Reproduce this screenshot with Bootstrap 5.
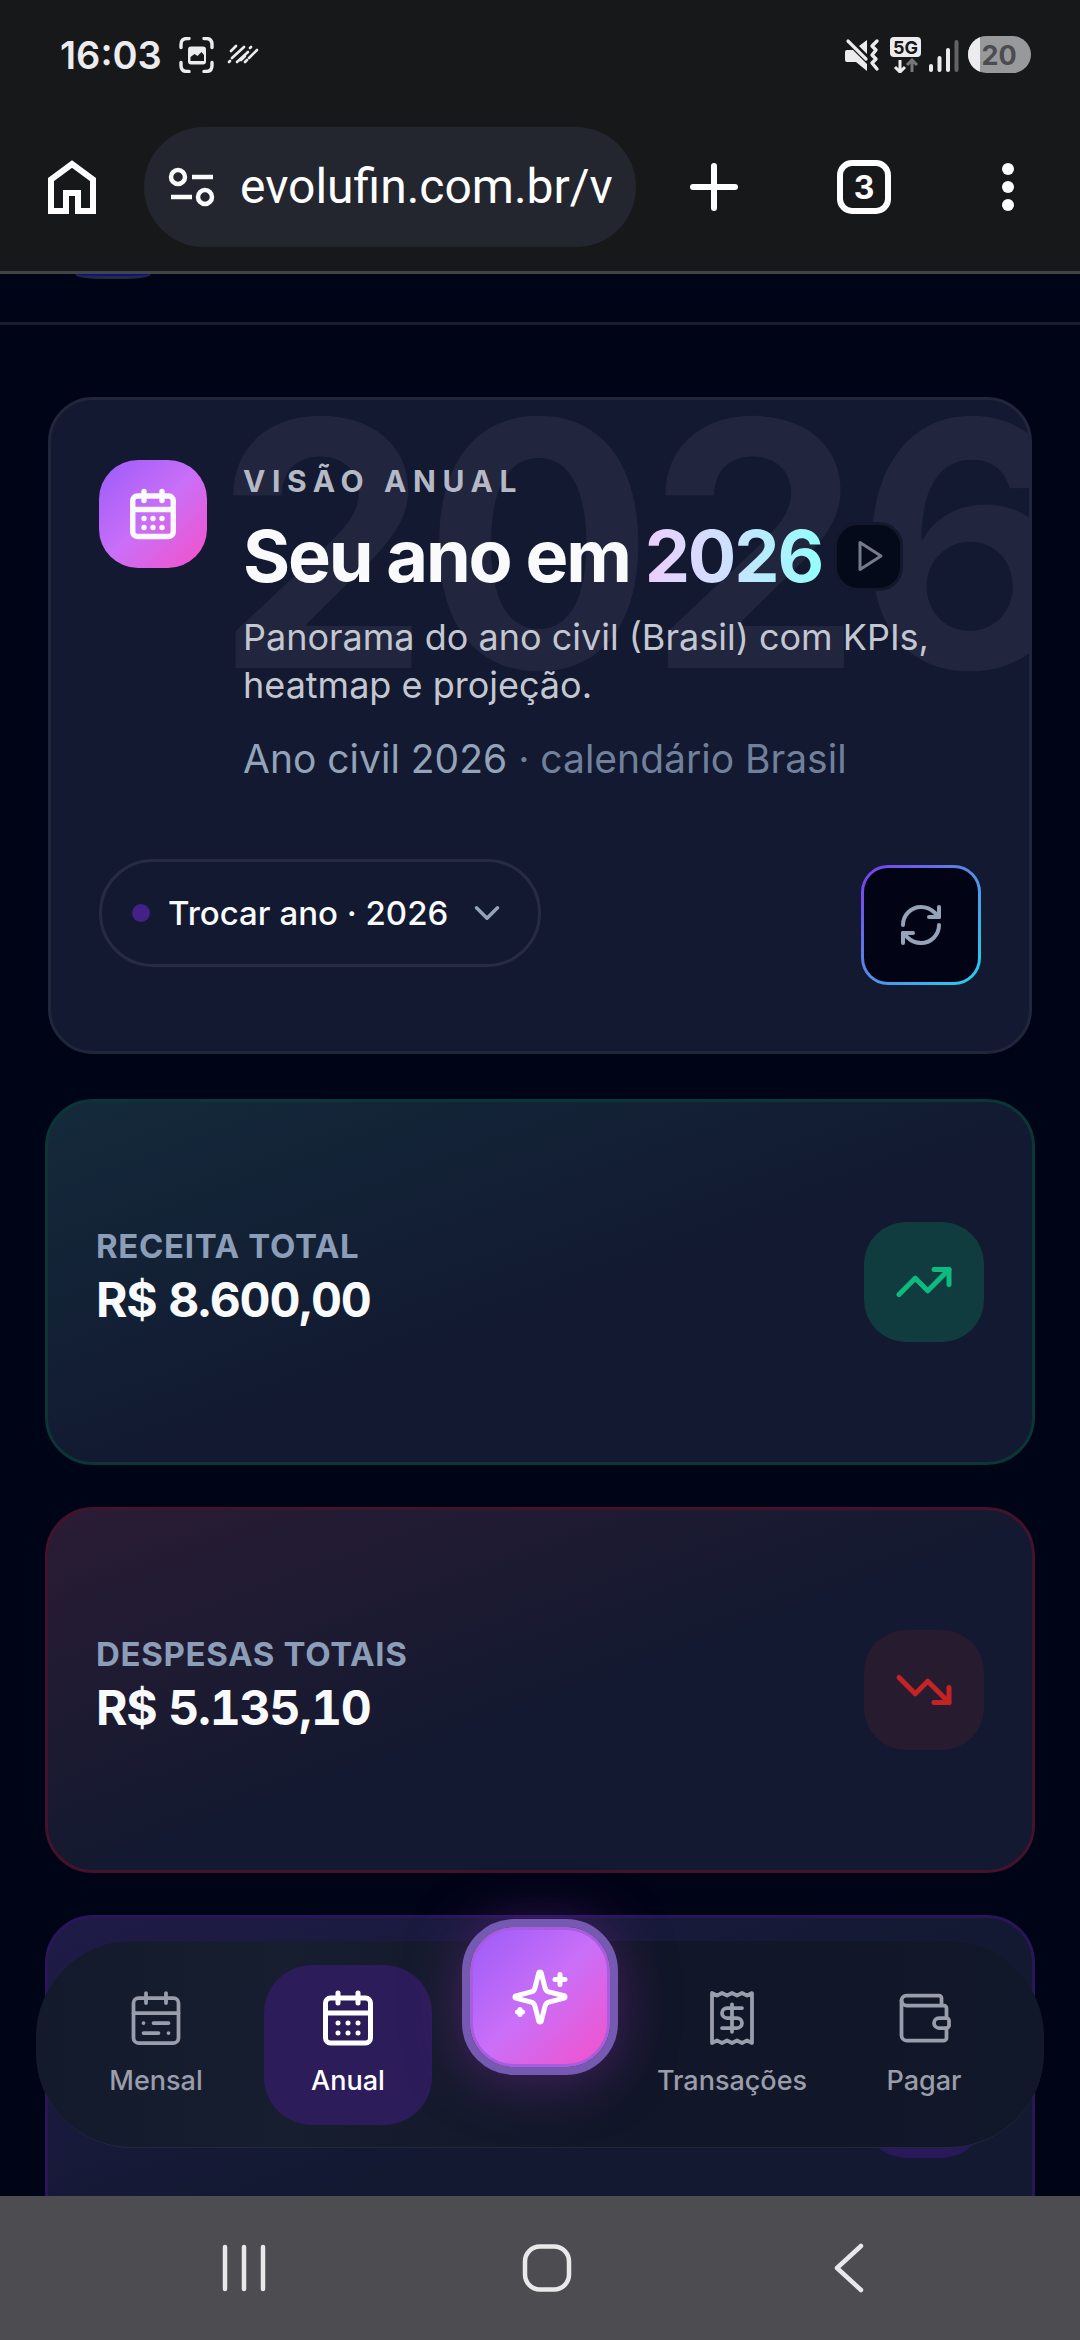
<!DOCTYPE html>
<html lang="pt-BR">
<head>
<meta charset="utf-8">
<meta name="viewport" content="width=device-width, initial-scale=1">
<title>Evolufin</title>
<link href="https://cdn.jsdelivr.net/npm/bootstrap@5.3.0/dist/css/bootstrap.min.css" rel="stylesheet">
<style>
  :root { --ink: #121930; --page: #000417; --slate: #94a3b8; }
  body { font-family: Inter, "Liberation Sans", sans-serif; font-optical-sizing: none; background: var(--page); color: #f8fafc; }
  svg { display: block; flex: none; }
  .ico { fill: none; stroke: currentColor; stroke-width: 2; stroke-linecap: round; stroke-linejoin: round; }
  .ico-thin { stroke-width: 1.5; }
  .ico-bold { stroke-width: 2.4; }
  .btn-bare { padding: 0; border: 0; background: none; color: inherit; }

  /* phone status bar and browser toolbar */
  .browser { background: #17181a; border-bottom: 3px solid #42444a; }
  .status { height: 110px; padding: 0 48px 0 60px; color: #ececee; }
  .clock { font-size: 38px; line-height: 44px; font-weight: 600; }
  .toolbar { height: 161px; padding: 17px 48px 24px; gap: 48px; }
  .toolbar .btn-bare { color: #fff; }
  .urlbox { height: 120px; min-width: 0; border-radius: 60px; background: #23262e; padding: 0 24px; gap: 24px; }
  .urlbox input { width: 0; font-family: Roboto, sans-serif; font-size: 48px; line-height: 60px; color: #fff; background: none; border: 0; padding: 0; min-width: 0; outline: 0; }
  .tools { gap: 99px; padding-left: 6px; }

  /* page */
  .page { min-height: 0; overflow: hidden; }
  .topstrip { height: 51px; border-bottom: 3px solid #1a1d2e; padding: 0 75px; }
  .logo-edge { width: 76px; height: 5px; border-radius: 0 0 24px 24px / 0 0 5px 5px; background: #0b1285; border-bottom: 3px solid #262a3c; }
  .stack { padding: 72px 45px 0; }

  .hero { margin: 0 3px 45px; padding: 60px 48px 66px; border: 3px solid #20273b; border-radius: 45px; background: var(--ink); overflow: hidden; }
  .watermark { top: -27px; right: -42px; font-size: 342px; line-height: 1; font-weight: 700; letter-spacing: -.02em; color: #21253e; }
  .hero-icon { width: 108px; height: 108px; border-radius: 39px; background: linear-gradient(135deg, #a05df8 5%, #ca6ff8 50%, #f550c8 100%); }
  .hero-head { gap: 36px; }
  .eyebrow { font-size: 30px; line-height: 42px; font-weight: 700; letter-spacing: .22em; color: #b5b9c5; }
  .hero-title { font-size: 72px; line-height: 72px; font-weight: 700; letter-spacing: -.03em; color: #f8fafc; }
  .year-text { background: linear-gradient(90deg, #edcefb, #cfe0fe 45%, #93fffb); -webkit-background-clip: text; background-clip: text; color: transparent; }
  .title-row { gap: 12px; margin: 18px 0 21px; }
  .play { width: 69px; height: 69px; border-radius: 24px; border: 3px solid #13182a; background: #050a1a; color: #747c8c; }
  .hero-desc { font-size: 36px; line-height: 48px; color: #c3c7d1; margin-bottom: 26px; }
  .hero-sub { font-size: 39px; line-height: 48px; color: #94a3b8; }
  .hero-sub span { color: #71819b; }
  .hero-actions { margin-top: 76px; }
  .year-pick { height: 108px; padding: 0 30px; gap: 18px; border: 3px solid #272c44; border-radius: 54px; font-size: 33px; line-height: 48px; font-weight: 500; color: #f8fafc; }
  .year-dot { width: 18px; height: 18px; background: #432189; }
  .refresh { width: 120px; height: 120px; margin-top: 6px; border: 3px solid transparent; border-radius: 27px; color: var(--slate);
    background: linear-gradient(#020314, #020314) padding-box, linear-gradient(135deg, #7c3aed, #5a86e6 45%, #22d3ee) border-box; }

  .kpi { --tint: #142a3b; --line: #0a3636; height: 366px; margin-bottom: 42px; padding: 0 48px; border: 3px solid var(--line); border-radius: 48px;
    background: linear-gradient(160deg, var(--tint), var(--ink) 55%); }
  .kpi-text { padding-bottom: 12px; }
  .kpi-label { font-size: 33px; line-height: 48px; font-weight: 700; letter-spacing: .02em; color: #8c9db8; }
  .kpi-value { font-size: 48px; line-height: 60px; font-weight: 700; letter-spacing: -.025em; font-variant-numeric: tabular-nums; }
  .kpi-icon { width: 120px; height: 120px; border-radius: 42px; background: #103b3f; color: #0dbb80; }
  .kpi-out { --tint: #2a1c34; --line: #44122d; }
  .kpi-out .kpi-icon { background: #271b30; color: #c42323; }
  .kpi-net { --tint: #1f1b48; --line: #2b1559; }
  .kpi-net .kpi-icon { background: #29195a; color: #a05df8; }

  /* floating app navigation */
  .dock { left: 36px; right: 36px; bottom: 48px; height: 207px; padding: 24px 36px; border-radius: 96px;
    background: linear-gradient(90deg, #121a2c, #171e2f 25%, #111628 60%, #111829); border-bottom: 1px solid #20283a; }
  .dock-item { width: 168px; height: 160px; border-radius: 48px; padding-top: 23px; gap: 15px; font-size: 27px; line-height: 36px; font-weight: 500; color: #9a9dab; text-decoration: none; }
  .dock-item.active { background: #2c1c5a; color: #fff; }
  .fab { width: 156px; height: 156px; margin: -46px 6px 0; border: 8px solid #7659b0; border-radius: 52px; color: #fff;
    background: linear-gradient(135deg, #a05df8 5%, #ca6ff8 50%, #f550c8 100%) padding-box;
    box-shadow: inset 0 0 0 3px #a85ce0, 0 6px 54px 0 #7a2a9a80; }

  .sysnav { height: 144px; background: #4d4c50; color: #e9e9ea; padding: 0 203px 0 216px; }
</style>
</head>
<body>
<div class="d-flex flex-column vh-100 overflow-hidden">
  <header class="browser flex-shrink-0">
    <div class="status d-flex align-items-center justify-content-between">
      <div class="d-flex align-items-center">
        <span class="clock">16:03</span>
        <svg class="ms-3" width="38" height="36" viewBox="0 0 38 36" aria-hidden="true"><path d="M3 11V8q0-6 6-6h2M26 2h2q6 0 6 6v3M34 26v3q0 6-6 6h-2M11 35H9q-6 0-6-6v-3" transform="translate(0 -.5)" fill="none" stroke="currentColor" stroke-width="3.400" stroke-linecap="round"/><rect x="10" y="9.500" width="18" height="18" rx="3" fill="currentColor"/><path d="M12.500 24v-4l4-3 3 2 4-4 2.500 3v6z" fill="#17181a"/></svg>
        <svg class="ms-2" width="36" height="22" viewBox="0 0 36 22" fill="none" stroke="currentColor" stroke-width="2.600" stroke-linecap="round" aria-hidden="true"><path d="M7 7l5-5M5 18l1-1M8 14L20 3M13 18L24 8M26 4l1-1M21 18l2-2M25 14l8-8"/><path d="M17 16l4-4"/></svg>
      </div>
      <div class="d-flex align-items-center">
        <svg width="36" height="36" viewBox="0 0 36 36" aria-hidden="true"><path d="M3 13h6l14 14v7L12 25H3q-2 0-2-2v-8q0-2 2-2zM15 9l8-6v14z" fill="currentColor"/><path d="M4 4l18 18" fill="none" stroke="currentColor" stroke-width="3.200" stroke-linecap="round"/><path d="M33 4l-5 5 4 4-4 5 4 4-4 4 5 6" fill="none" stroke="currentColor" stroke-width="3.400" stroke-linecap="round" stroke-linejoin="round"/></svg>
        <svg class="ms-2" width="36" height="36" viewBox="0 0 36 36" aria-label="5G"><rect x="2" y="0" width="31" height="20" rx="4" fill="currentColor"/><text x="17.500" y="16.500" text-anchor="middle" font-family="Inter, sans-serif" font-weight="700" font-size="18" fill="#17181a">5G</text><path d="M12 23v11M7 30l5 5 5-5" fill="none" stroke="currentColor" stroke-width="3"/><path d="M24 35V24M19 28l5-5 5 5" fill="none" stroke="#77787a" stroke-width="3"/></svg>
        <svg class="ms-1" width="32" height="36" viewBox="0 0 32 36" stroke="currentColor" stroke-width="4" stroke-linecap="round" aria-hidden="true"><path d="M3 29v4M11.500 21v12M20 13v20"/><path d="M28.500 5v28" stroke="#636466"/></svg>
        <svg class="ms-2" width="64" height="38" viewBox="0 0 64 38" aria-label="20%"><defs><clipPath id="cell"><rect width="63" height="37" rx="18.500"/></clipPath></defs><g clip-path="url(#cell)"><rect width="63" height="37" fill="#98999b"/><rect width="12" height="37" fill="#ececee"/></g><text x="31" y="29" text-anchor="middle" font-family="Inter, sans-serif" font-weight="700" font-size="27" fill="#4b4c50">20</text></svg>
      </div>
    </div>
    <div class="toolbar d-flex align-items-center">
      <button class="btn-bare" aria-label="Início"><svg width="48" height="54" viewBox="0 0 48 54" fill="none" stroke="currentColor" stroke-width="6"><path d="M3 51V19.500L24 4l21 15.500V51H30V33H18v18z"/></svg></button>
      <div class="urlbox d-flex align-items-center flex-fill">
        <svg width="48" height="42" viewBox="0 0 48 42" fill="none" stroke="currentColor" stroke-width="4.500" aria-hidden="true"><circle cx="10" cy="11" r="7"/><path d="M24 11h21M3 31h21"/><circle cx="37" cy="31" r="7"/></svg>
        <input class="flex-fill" type="text" value="evolufin.com.br/v" aria-label="Endereço">
      </div>
      <div class="tools d-flex align-items-center">
        <button class="btn-bare" aria-label="Nova aba"><svg width="48" height="54" viewBox="0 0 48 54" fill="none" stroke="currentColor" stroke-width="6" stroke-linecap="round"><path d="M24 6v42M3 27h42"/></svg></button>
        <button class="btn-bare" aria-label="Abas"><svg width="54" height="54" viewBox="0 0 54 54"><rect x="3" y="3" width="48" height="48" rx="12" fill="none" stroke="currentColor" stroke-width="6"/><text x="27" y="39" text-anchor="middle" font-family="Inter, sans-serif" font-weight="700" font-size="32" fill="currentColor">3</text></svg></button>
        <button class="btn-bare" aria-label="Menu"><svg width="42" height="54" viewBox="0 0 42 54" fill="currentColor"><circle cx="18" cy="9" r="6"/><circle cx="18" cy="27" r="6"/><circle cx="18" cy="45" r="6"/></svg></button>
      </div>
    </div>
  </header>

  <main class="page position-relative flex-fill">
    <div class="topstrip"><div class="logo-edge"></div></div>
    <div class="stack">
      <section class="hero position-relative">
        <div class="watermark position-absolute" aria-hidden="true">2026</div>
        <div class="hero-head position-relative d-flex align-items-start">
          <div class="hero-icon d-flex align-items-center justify-content-center flex-shrink-0">
            <svg class="ico ico-bold" width="54" height="54" viewBox="0 0 24 24"><path d="M8 2v4M16 2v4M3 10h18M8 14h.01M12 14h.01M16 14h.01M8 18h.01M12 18h.01M16 18h.01"/><rect x="3" y="4" width="18" height="18" rx="2"/></svg>
          </div>
          <div class="flex-fill">
            <div class="eyebrow">VISÃO ANUAL</div>
            <div class="title-row d-flex align-items-center">
              <h1 class="hero-title m-0">Seu ano em <span class="year-text">2026</span></h1>
              <button class="btn-bare play d-flex align-items-center justify-content-center" aria-label="Reproduzir"><svg class="ico" width="36" height="36" viewBox="0 0 24 24"><path d="M6 3l14 9-14 9z"/></svg></button>
            </div>
            <p class="hero-desc">Panorama do ano civil (Brasil) com KPIs, heatmap e projeção.</p>
            <p class="hero-sub m-0">Ano civil 2026 <span>· calendário Brasil</span></p>
          </div>
        </div>
        <div class="hero-actions position-relative d-flex align-items-start justify-content-between">
          <button class="btn year-pick d-flex align-items-center"><span class="year-dot rounded-circle"></span>Trocar ano · 2026<svg class="ico" width="42" height="42" viewBox="0 0 24 24" color="#94a3b8"><path d="M6 9l6 6 6-6"/></svg></button>
          <button class="refresh d-flex align-items-center justify-content-center" aria-label="Atualizar"><svg class="ico" width="48" height="48" viewBox="0 0 24 24"><path d="M3 12a9 9 0 0 1 9-9 9.750 9.750 0 0 1 6.740 2.740L21 8"/><path d="M21 3v5h-5M21 12a9 9 0 0 1-9 9 9.750 9.750 0 0 1-6.740-2.740L3 16"/><path d="M8 16H3v5"/></svg></button>
        </div>
      </section>

      <section class="kpi kpi-in d-flex align-items-center justify-content-between">
        <div class="kpi-text"><div class="kpi-label">RECEITA TOTAL</div><div class="kpi-value">R$ 8.600,00</div></div>
        <div class="kpi-icon d-flex align-items-center justify-content-center"><svg class="ico" width="60" height="60" viewBox="0 0 24 24"><path d="M22 7l-8.500 8.500-5-5L2 17"/><path d="M16 7h6v6"/></svg></div>
      </section>
      <section class="kpi kpi-out d-flex align-items-center justify-content-between">
        <div class="kpi-text"><div class="kpi-label">DESPESAS TOTAIS</div><div class="kpi-value">R$ 5.135,10</div></div>
        <div class="kpi-icon d-flex align-items-center justify-content-center"><svg class="ico" width="60" height="60" viewBox="0 0 24 24"><path d="M22 17l-8.500-8.500-5 5L2 7"/><path d="M16 17h6v-6"/></svg></div>
      </section>
      <section class="kpi kpi-net d-flex align-items-center justify-content-end">
        <div class="kpi-icon"></div>
      </section>
    </div>

    <nav class="dock position-absolute d-flex justify-content-between" aria-label="Principal">
      <a href="#" class="dock-item d-flex flex-column align-items-center"><svg class="ico ico-thin" width="60" height="60" viewBox="0 0 24 24"><rect x="3" y="4" width="18" height="18" rx="2"/><path d="M16 2v4M3 10h18M8 2v4M17 14h-6M13 18H7M7 14h.01M17 18h.01"/></svg>Mensal</a>
      <a href="#" class="dock-item active d-flex flex-column align-items-center"><svg class="ico" width="60" height="60" viewBox="0 0 24 24"><path d="M8 2v4M16 2v4M3 10h18M8 14h.01M12 14h.01M16 14h.01M8 18h.01M12 18h.01M16 18h.01"/><rect x="3" y="4" width="18" height="18" rx="2"/></svg>Anual</a>
      <button class="fab d-flex align-items-center justify-content-center p-0" aria-label="Assistente"><svg class="ico" width="60" height="60" viewBox="0 0 24 24"><path d="M9.937 15.500A2 2 0 0 0 8.500 14.063l-6.135-1.582a.5.5 0 0 1 0-.962L8.500 9.936A2 2 0 0 0 9.937 8.500l1.582-6.135a.5.5 0 0 1 .963 0L14.063 8.500A2 2 0 0 0 15.500 9.937l6.135 1.581a.5.5 0 0 1 0 .964L15.500 14.063a2 2 0 0 0-1.437 1.437l-1.582 6.135a.5.5 0 0 1-.963 0z"/><path d="M20 3v4M22 5h-4M4 17v2M5 18H3"/></svg></button>
      <a href="#" class="dock-item d-flex flex-column align-items-center"><svg class="ico ico-thin" width="60" height="60" viewBox="0 0 24 24"><path d="M4 2v20l2-1 2 1 2-1 2 1 2-1 2 1 2-1 2 1V2l-2 1-2-1-2 1-2-1-2 1-2-1-2 1Z"/><path d="M16 8h-6a2 2 0 1 0 0 4h4a2 2 0 1 1 0 4H8M12 17.500v-11"/></svg>Transações</a>
      <a href="#" class="dock-item d-flex flex-column align-items-center"><svg class="ico ico-thin" width="60" height="60" viewBox="0 0 24 24"><path d="M19 7V4a1 1 0 0 0-1-1H5a2 2 0 0 0 0 4h15a1 1 0 0 1 1 1v4h-3a2 2 0 0 0 0 4h3a1 1 0 0 0 1-1v-2a1 1 0 0 0-1-1"/><path d="M3 5v14a2 2 0 0 0 2 2h15a1 1 0 0 0 1-1v-4"/></svg>Pagar</a>
    </nav>
  </main>

  <footer class="sysnav d-flex align-items-center justify-content-between flex-shrink-0">
    <button class="btn-bare" aria-label="Recentes"><svg width="56" height="56" viewBox="0 0 56 56" stroke="currentColor" stroke-width="4.500" stroke-linecap="round"><path d="M9 7v42M28 7v42M47 7v42"/></svg></button>
    <button class="btn-bare" aria-label="Início"><svg width="56" height="56" viewBox="0 0 56 56" fill="none" stroke="currentColor" stroke-width="4.500"><rect x="6" y="6.500" width="44" height="43" rx="15"/></svg></button>
    <button class="btn-bare" aria-label="Voltar"><svg width="56" height="56" viewBox="0 0 56 56" fill="none" stroke="currentColor" stroke-width="4.500" stroke-linecap="round" stroke-linejoin="round"><path d="M40 6L16 28l24 22"/></svg></button>
  </footer>
</div>
<script src="https://cdn.jsdelivr.net/npm/bootstrap@5.3.0/dist/js/bootstrap.bundle.min.js"></script>
</body>
</html>
